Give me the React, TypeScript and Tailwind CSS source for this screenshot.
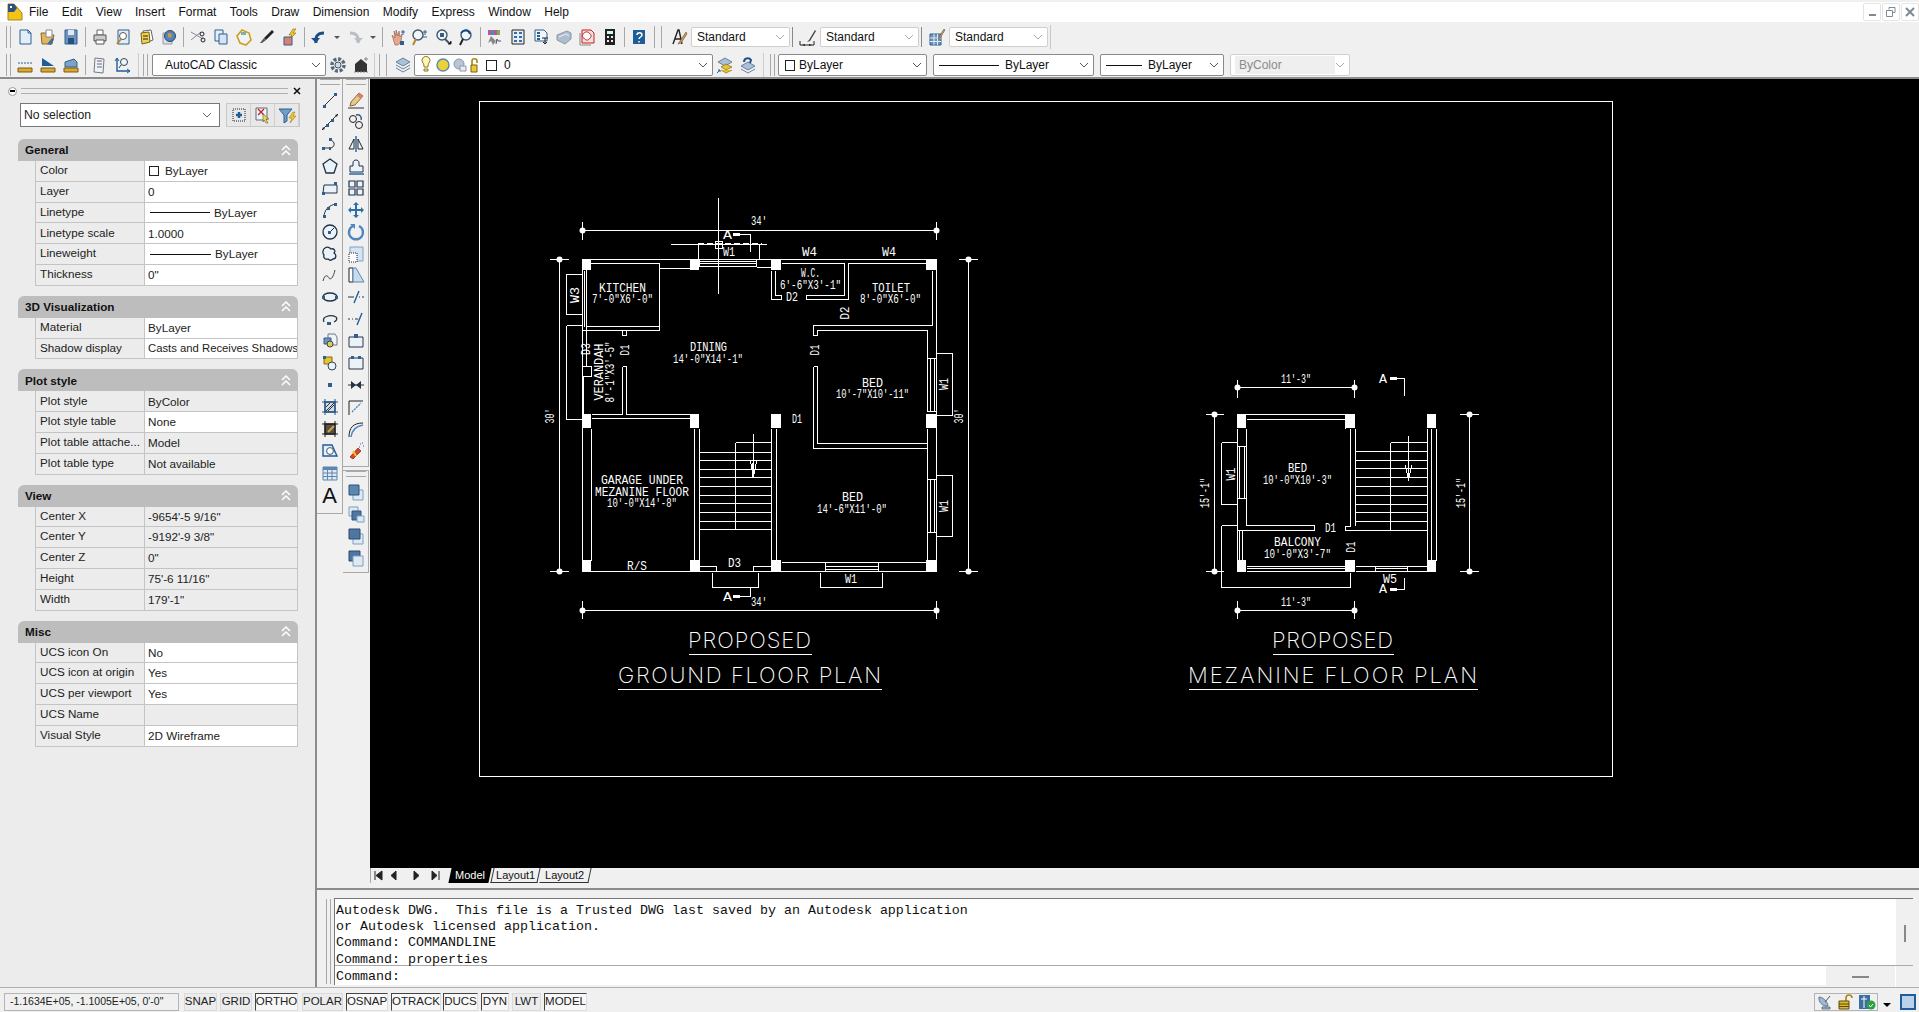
import type { ReactNode } from "react";

const B = "#2f5f8f";
const L = "#c7dbef";
const K = "#222";

const icons: Record<string, ReactNode> = {
  new: <><path d="M4 2h8l3 3v11H4z" fill="#e4eef8" stroke={B} /><path d="M12 2v3h3" fill="none" stroke={B} /></>,
  open: <><path d="M2 5h6l2 2h5l-2 9H3z" fill="#e2b65a" stroke="#8a6a2a" /><path d="M7 2h6v7H7z" fill="#fff" stroke="#889" /><path d="M8 16l5-6 2 1-3 6z" fill="#3b6ea5" /></>,
  save: <><path d="M3 2h12v14H3z" fill="#6f93bb" stroke={B} /><path d="M6 2h6v5H6z" fill="#dfe9f4" /><path d="M6 10h6v6H6z" fill="#24527f" /></>,
  plot: <><path d="M6 2h6v5H6z" fill="#fff" stroke="#666" /><path d="M3 7h12v6H3z" fill="#ccc" stroke="#555" /><path d="M5 12h8v4H5z" fill="#fff" stroke="#555" /></>,
  preview: <><path d="M4 2h11v14H4z" fill="#e4eef8" stroke={B} /><circle cx="9" cy="8" r="3.5" fill="#fff" stroke="#555" /><path d="M7 11l-4 5" stroke="#b8862d" strokeWidth="2" /></>,
  publish: <><path d="M6 3l8-1 2 10-8 3z" fill="#fff" stroke="#666" /><path d="M4 5l8-1 1 10-8 2z" fill="#f3d24f" stroke="#75601c" /><path d="M6 8h5M6 11h5" stroke={K} /></>,
  globe: <><path d="M3 5h9v11H3z" fill="#dde" stroke="#99a" /><circle cx="10" cy="8" r="5.5" fill="#4f86bf" stroke="#345" /><path d="M8 5l4 1-1 4-3-1z" fill="#d09a3a" /></>,
  cut: <><path d="M2 4l12 7M2 12l10-8" stroke="#889" /><circle cx="13" cy="6" r="2" fill="none" stroke={K} /><circle cx="14" cy="12" r="2" fill="none" stroke={K} /></>,
  copy: <><path d="M3 2h8v11H3z" fill="#e4eef8" stroke={B} /><path d="M7 6h8v10H7z" fill="#d5e4f3" stroke={B} /></>,
  paste: <><path d="M7 2l7 3 2 7-5 5-6-2-3-7z" fill="#eef3f8" stroke="#c8a21e" strokeWidth="1.6" /><path d="M6 4h5v3H6z" fill="#8aa" /></>,
  brush: <><path d="M14 2l2 2-8 8-2-2z" fill={K} /><path d="M6 10l2 2-4 3H2z" fill="#555" /></>,
  block: <><path d="M12 1l-4 6h3l-2 4 6-6h-3l3-4z" fill="#f3c928" stroke="#8a6a10" strokeWidth=".6" /><path d="M3 9h8v8H3z" fill="#d9806e" stroke={B} /></>,
  undo: <><path d="M6 15c-1-6 1-10 8-10" fill="none" stroke="#1d4f86" strokeWidth="3" /><path d="M1 10l5 5 4-5z" fill="#1d4f86" /></>,
  redo: <><path d="M12 15c1-6-1-10-8-10" fill="none" stroke="#b8bec4" strokeWidth="3" /><path d="M17 10l-5 5-4-5z" fill="#b8bec4" /></>,
  pan: <><path d="M4 7l3 3-1-7 2 5V2l2 6 1-5 1 6 2-3-1 8-3 3H7z" fill="#e7a58c" stroke="#8a5a4a" strokeWidth=".6" /><path d="M12 13h4v4h-4z" fill={B} /><path d="M15 2v5M13 4h4" stroke={B} /></>,
  zoomRt: <><circle cx="7" cy="7" r="5" fill="#eef5fb" stroke="#456" strokeWidth="1.4" /><path d="M5 11l-3 6" stroke="#b8862d" strokeWidth="2" /><path d="M14 2v5M12 4h4M12 9h4" stroke={B} /></>,
  zoomWin: <><circle cx="8" cy="7" r="5" fill="#eef5fb" stroke="#456" strokeWidth="1.4" /><path d="M6 5h4v4H6z" fill={B} /><path d="M11 11l4 4" stroke="#456" strokeWidth="2" /><path d="M14 16h3v-3" stroke={K} /></>,
  zoomPrev: <><circle cx="9" cy="7" r="5" fill="#eef5fb" stroke="#456" strokeWidth="1.4" /><path d="M6 11l-3 6" stroke={K} strokeWidth="2" /><path d="M4 5c3-4 8-3 9 1" fill="none" stroke="#1d4f86" strokeWidth="2" /></>,
  props: <><path d="M2 2h12v5H2z" fill="#c2548b" /><path d="M5 2h3v5H5z" fill="#4c8bc9" /><path d="M11 2h3v5h-3z" fill="#7cb24a" /><path d="M5 8l5 5-3 4-2-4-3 2z" fill="#888" /><path d="M10 16l1-5 1 2h3" fill="none" stroke="#456" /></>,
  dc: <><path d="M3 2h12v14H3z" fill="#e4eef8" stroke={K} /><path d="M5 4h3v2H5zM10 4h3v2h-3zM5 8h3v2H5zM10 8h3v2h-3zM5 12h3v2H5zM10 12h3v2h-3z" fill="#3b6ea5" /></>,
  palette: <><path d="M3 2h9l3 3v8H3z" fill="#eef5fb" stroke={B} /><path d="M5 5h3M5 8h3M5 11h3" stroke={B} strokeWidth="2" /><path d="M10 10h6M13 10v6M11 14l2 2 2-2" stroke={K} fill="none" /></>,
  sheet: <><path d="M2 7l10-4 4 2v6l-6 5-8-4z" fill="#aebccc" stroke="#8a9aa8" /><path d="M4 9l7-3 3 2" fill="none" stroke="#eef" /></>,
  markup: <><path d="M4 2h9l3 3v10H4z" fill="#f3dede" stroke="#c72020" /><path d="M6 5c2-2 5-1 6 1 2 1 1 4-1 5-1 2-4 1-5-1-2 0-2-4 0-5z" fill="#fff" stroke="#c72020" /><path d="M2 5v12h11" fill="none" stroke="#888" /></>,
  calc: <><path d="M4 1h10v16H4z" fill="#222" /><path d="M6 3h6v3H6z" fill="#cfd" /><path d="M6 8h2v2H6zM10 8h2v2h-2zM6 12h2v2H6zM10 12h2v2h-2z" fill="#eee" /></>,
  help: <><path d="M3 2h12v14H3z" fill="#1f5d99" /><path d="M7 7c0-3 5-3 5 0 0 2-3 2-3 4M9 13v1.5" stroke="#fff" fill="none" strokeWidth="1.5" /></>,
  ruleA: <><path d="M2 7h14" stroke={B} strokeDasharray="2 1" /><path d="M2 12h14v4H2z" fill="#d8a933" stroke="#7a5a10" /></>,
  ruleB: <><path d="M3 2l12 8H3z" fill="#1f5d99" /><path d="M2 12h14v4H2z" fill="#d8a933" stroke="#7a5a10" /></>,
  ruleC: <><path d="M3 6l9-3 3 3v5H3z" fill="#7fa2c7" stroke={B} /><path d="M2 12h14v4H2z" fill="#d8a933" stroke="#7a5a10" /></>,
  list: <><path d="M4 2l9 1-1 14-9-1z" fill="#eef3f8" stroke="#778" /><path d="M6 5h5M6 8h5M6 11h5" stroke="#667" /></>,
  ucs: <><path d="M3 2v13h13" fill="none" stroke="#1f5d99" strokeWidth="1.4" /><path d="M1 5l2-3 2 3M13 13l3 2-3 2" fill="none" stroke="#1f5d99" /><circle cx="10" cy="6" r="3.5" fill="#eef5fb" stroke="#345" /><path d="M7 9l-2 3" stroke="#345" /></>,
  gear: <><circle cx="9" cy="9" r="6" fill="none" stroke="#5a6a78" strokeWidth="3.5" strokeDasharray="3 1.6" /><circle cx="9" cy="9" r="3" fill="#cfdbe6" stroke="#456" /></>,
  house: <><path d="M3 8l6-5 6 5v8H3z" fill="#333" /><path d="M14 1v4M12 3h4" stroke="#888" /><path d="M2 16h14" stroke="#888" strokeDasharray="2 1" /></>,
  layers: <><path d="M9 2l7 4-7 4-7-4z" fill="#aac1d8" stroke="#69829b" /><path d="M2 9l7 4 7-4M2 12l7 4 7-4" fill="none" stroke="#69829b" /></>,
  layerCur: <><path d="M9 2l7 4-7 4-7-4z" fill="#aac1d8" stroke="#69829b" /><path d="M5 11l5 3 6-3-6-3zM5 14l5 3 6-3" fill="#e7c32f" stroke="#8a6a10" strokeWidth=".7" /><path d="M1 17l3-3M2 14h2v2" stroke="#1f5d99" fill="none" /></>,
  layerPrev: <><path d="M9 6l7 4-7 4-7-4z" fill="#aac1d8" stroke="#69829b" /><path d="M2 13l7 4 7-4" fill="none" stroke="#69829b" /><path d="M5 6c0-4 5-5 7-2l-1 3" fill="none" stroke="#1d4f86" strokeWidth="2" /></>,
  textStyle: <><path d="M3 16L8 2h1l3 14M5 11h6" fill="none" stroke={K} strokeWidth="1.4" /><path d="M16 4l-6 9-2 3 3-1 6-9z" fill="#c99a4a" stroke="#654" strokeWidth=".6" /></>,
  dimStyle: <><path d="M1 17h14M1 13v4M15 13v4" stroke={K} /><path d="M3 17l3-1v2zM13 17l-3-1v2z" fill={K} /><path d="M16 2l-6 10-2 2 3-1 6-10z" fill="#444" /></>,
  tableStyle: <><path d="M2 6h11v11H2z" fill="#6f93bb" stroke={B} /><path d="M2 10h11M2 13.5h11M6 6v11M9.5 6v11" stroke="#dfe9f4" /><path d="M16 1l-5 8-1 2 2-1 5-8z" fill="#c99a4a" stroke="#654" strokeWidth=".6" /></>,
  sel1: <><path d="M3 3h12v12H3z" fill="none" stroke={K} strokeDasharray="1 1" /><path d="M6 9h6M9 6v6" stroke="#1f5d99" strokeWidth="2.4" /></>,
  sel2: <><path d="M2 2h11v12H2z" fill="#eef5fb" stroke="#667" /><path d="M4 3l6 6M10 3L4 9" stroke="#d02020" strokeWidth="1.4" /><path d="M9 8l6 5-3 0 2 4-2 0-2-3-1 2z" fill="#f2d94a" stroke="#444" strokeWidth=".5" /></>,
  sel3: <><path d="M1 3h13L9 9v6l-3 2V9z" fill="#6f9fc9" stroke={B} /><path d="M15 6l-4 6h3l-2 5 6-7h-3l2-4z" fill="#f3c928" stroke="#8a6a10" strokeWidth=".5" /></>,
  line: <><path d="M3 15L15 3" stroke="#333" /><path d="M2 14h3v3H2zM13 2h3v3h-3z" fill={B} /></>,
  xline: <><path d="M1 17L17 1" stroke="#333" /><path d="M1 17l3-1-2-2zM17 1l-3 1 2 2z" fill={K} /><path d="M5 11h3v3H5zM10 6h3v3h-3z" fill={B} /></>,
  pline: <><path d="M3 13h6M9 13c5 0 6-7 0-8" fill="none" stroke="#333" /><path d="M1 12h3v3H1zM8 12h2v3H8zM8 3h3v3H8z" fill={B} /></>,
  polygon: <><path d="M9 2l7 5-3 9H5L2 7z" fill="#eaf2fa" stroke="#234" strokeWidth="1.3" /></>,
  rect: <><path d="M3 6h13v8H2z" fill="#eaf2fa" stroke="#234" /><path d="M13 3h3v3h-3zM1 13h3v3H1z" fill={B} /></>,
  arc: <><path d="M3 16C3 9 8 4 15 3" fill="none" stroke="#333" /><path d="M2 14h3v3H2zM13 2h3v3h-3zM6 6h3v3H6z" fill={B} /></>,
  circle: <><circle cx="9" cy="9" r="7" fill="#eaf2fa" stroke="#234" strokeWidth="1.3" /><path d="M9 9l4-4" stroke={K} /><path d="M7 8h3v3H7z" fill={B} /></>,
  cloud: <><path d="M4 3c3-2 5 0 6 1 3-1 5 2 3 4 3 2 2 6-1 6-2 2-4 1-5 0-3 1-5-2-4-4-2-2-1-6 1-7z" fill="#eaf2fa" stroke="#234" strokeWidth="1.3" /></>,
  spline: <><path d="M2 15c2-8 5-5 6-3s4 1 6-8" fill="none" stroke="#444" /></>,
  ellipse: <><ellipse cx="9" cy="9" rx="7" ry="4" fill="#eaf2fa" stroke="#234" strokeWidth="1.4" /><path d="M1 8h3v3H1zM14 8h3v3h-3z" fill={B} /></>,
  earc: <><path d="M3 12C0 7 9 4 15 7c2 2 0 4-2 5" fill="none" stroke="#234" strokeWidth="1.3" /><path d="M6 12h4v3H6z" fill={B} /></>,
  insert: <><path d="M7 2h7l2 3v8H7z" fill="#eaf2fa" stroke="#778" /><path d="M3 6h7v6H3z" fill="#6f93bb" stroke={B} /><circle cx="9" cy="12" r="3" fill="#d7cd5a" stroke="#444" /></>,
  mkblock: <><path d="M3 3h8v7H3z" fill="#e7c32f" stroke="#806a10" /><circle cx="11" cy="12" r="4" fill="#eaf2fa" stroke="#345" /><path d="M2 2h3v3H2z" fill={B} /></>,
  point: <><path d="M7 7h4v4H7z" fill={B} /></>,
  hatch: <><path d="M4 4h10v10H4z" fill="#cfdde9" stroke="#2a5480" strokeWidth="1.4" /><path d="M1 4h16M1 14h16M4 1v16M14 1v16" stroke="#2a5480" /><path d="M5 9l4-4M7 13l6-6M5 13l8-8" stroke="#333" /></>,
  gradient: <><path d="M4 4h10v10H4z" fill="#5a5140" stroke="#222" strokeWidth="1.4" /><path d="M1 4h16M1 14h16M4 1v16M14 1v16" stroke="#222" /><path d="M7 12l6-6" stroke="#c9a84c" strokeWidth="2" /></>,
  region: <><path d="M2 3h9l5 11H2z" fill="#e7f0f8" stroke="#1f5d99" strokeWidth="1.4" /><circle cx="9" cy="9" r="3.4" fill="#fff" stroke="#456" /></>,
  table: <><path d="M2 3h14v13H2z" fill="#dfe9f4" stroke="#5f86ad" /><path d="M2 3h14v3H2z" fill="#5f86ad" /><path d="M2 9h14M2 12.5h14M6.5 6v10M11 6v10" stroke="#5f86ad" /></>,
  erase: <><path d="M12 2l4 3-8 9-5 1 1-4z" fill="#e6c98e" stroke="#8a6a2a" /><path d="M12 2l4 3-2 3-4-3z" fill="#d9806e" /><path d="M1 17h16" stroke="#333" /></>,
  ccopy: <><circle cx="6" cy="6" r="3.5" fill="none" stroke={K} /><circle cx="12" cy="12" r="3.5" fill="none" stroke={K} /><path d="M9 2c4-1 6 2 5 5" fill="none" stroke={B} strokeWidth="1.4" /></>,
  mirror: <><path d="M9 1v16" stroke="#1f5d99" strokeWidth="1.4" /><path d="M7 4L2 14h5zM11 4l5 10h-5z" fill="#eef5fb" stroke={K} /></>,
  offset: <><path d="M3 15V9h3V6c0-4 6-4 6 0v3h4v6z" fill="#eaf2fa" stroke="#234" /><path d="M2 17h15" stroke="#1f5d99" strokeWidth="1.4" /></>,
  array: <><path d="M2 2h6v6H2zM10 2h6v6h-6zM2 10h6v6H2zM10 10h6v6h-6z" fill="#eaf2fa" stroke="#234" strokeWidth="1.2" /></>,
  move: <><path d="M9 1l3 3h-2v4h4V6l3 3-3 3v-2h-4v4h2l-3 3-3-3h2v-4H4v2L1 9l3-3v2h4V4H6z" fill="#2f6fa8" /></>,
  rotate: <><path d="M6 3a7 7 0 1 0 6 0" fill="none" stroke="#4f86bf" strokeWidth="2.4" /><path d="M3 1h5v5z" fill="#4f86bf" /></>,
  scale: <><path d="M3 2h13v14H3z" fill="#d5e4f3" stroke="#7d9fbf" /><path d="M2 8h8v9H2z" fill="#fff" stroke={K} strokeDasharray="1 1" /></>,
  stretch: <><path d="M2 2h4v14H2z" fill="#fff" stroke={K} /><path d="M6 2h3l8 14H6z" fill={L} stroke="#5f86ad" /></>,
  trim: <><path d="M1 9h6M12 9h1M15 9h2" stroke="#333" /><path d="M12 3L7 15" stroke="#1f5d99" strokeWidth="1.4" /></>,
  extend: <><path d="M1 9h2M5 9h1M8 9h3" stroke="#333" /><path d="M15 3l-5 12" stroke="#1f5d99" strokeWidth="1.4" /></>,
  brk1: <><path d="M2 5h14v10H2z" fill="#eaf2fa" stroke="#334" /><path d="M7 2h4v4H7z" fill={B} /></>,
  brk2: <><path d="M2 4h14v11H2z" fill="#eaf2fa" stroke="#334" /><path d="M4 2h3v3H4zM11 2h3v3h-3z" fill={B} /></>,
  join: <><path d="M1 9h16" stroke="#333" /><path d="M4 5l5 4-5 4zM14 5L9 9l5 4z" fill="#234" /></>,
  chamfer: <><path d="M2 17V3h14" fill="none" stroke={K} /><path d="M5 14L14 5" stroke="#4f86bf" strokeWidth="1.4" strokeDasharray="2 1" /></>,
  fillet: <><path d="M2 17C2 8 6 3 16 3" fill="none" stroke={K} /><path d="M4 17C5 10 9 6 16 5" fill="none" stroke="#4f86bf" strokeWidth="1.6" /></>,
  explode: <><path d="M3 15l8-9 3 3-8 8z" fill="#d44a20" stroke="#802" strokeWidth=".6" /><path d="M6 9l3 5" stroke="#f3c928" strokeWidth="2" /><path d="M13 2h1M16 4h1M15 1h1M12 5h1" stroke="#889" strokeWidth="1.5" /></>,
  order1: <><path d="M6 7h10v10H6z" fill="#dfe9f4" stroke="#7d9fbf" /><path d="M2 2h10v10H2z" fill="#5f86ad" stroke="#2a5480" /></>,
  order2: <><path d="M2 2h9v9H2z" fill="#dfe9f4" stroke="#7d9fbf" /><path d="M5 6h9v9H5z" fill="#4f76a0" stroke="#2a5480" /><path d="M10 11h7v6h-7z" fill="#dfe9f4" stroke="#7d9fbf" /></>,
  order3: <><path d="M6 7h10v10H6z" fill="#dfe9f4" stroke="#7d9fbf" /><path d="M2 2h11v10H2z" fill="#4f76a0" stroke="#2a4a70" /></>,
  order4: <><path d="M2 2h11v10H2z" fill="#4f76a0" stroke="#2a4a70" /><path d="M6 7h10v10H6z" fill="#dfe9f4" stroke="#7d9fbf" /></>,
};

function Icon({ name, size = 18 }: { name: string; size?: number }) {
  return (
    <svg width={size} height={size} viewBox="0 0 18 18" className="shrink-0">
      {icons[name]}
    </svg>
  );
}

function Btn({ name }: { name: string }) {
  return (
    <div className="w-[23px] h-[22px] flex items-center justify-center shrink-0">
      <Icon name={name} />
    </div>
  );
}

function Sep() {
  return (
    <div className="w-[6px] h-[20px] flex justify-center shrink-0">
      <div className="w-px bg-[#a8a8a8]" />
    </div>
  );
}

function Grip({ className = "" }: { className?: string }) {
  return <div className={`h-[22px] shrink-0 border-x border-[#a8a8a8] ${className}`} />;
}

function Chevron({ color = "#666" }: { color?: string }) {
  return (
    <svg width="10" height="6" viewBox="0 0 10 6" className="shrink-0">
      <path d="M1 1l4 4 4-4" fill="none" stroke={color} />
    </svg>
  );
}

function Combo({ w, children, light = false }: { w: string; children: ReactNode; light?: boolean }) {
  return (
    <div className={`${w} h-full bg-white rounded-[2px] border flex items-center pl-1 pr-1 shrink-0 overflow-hidden ${light ? "border-[#cfcfcf]" : "border-[#8a8a8a]"}`}>
      <div className="flex-1 flex items-center gap-1 min-w-0">{children}</div>
      <Chevron color={light ? "#aaa" : "#555"} />
    </div>
  );
}

function Dropdown() {
  return <div className="w-[13px] flex justify-center shrink-0"><div className="w-0 h-0 border-x-[3px] border-t-[3px] border-x-transparent border-t-[#555]" /></div>;
}

function Menu() {
  const items = ["File", "Edit", "View", "Insert", "Format", "Tools", "Draw", "Dimension", "Modify", "Express", "Window", "Help"];
  return (
    <div className="h-[20px] mt-[2px] bg-white flex items-center relative shrink-0">
      <svg width="16" height="18" viewBox="0 0 16 18" className="ml-[7px]">
        <path d="M1 1h6l8 9v7H1z" fill="#f0c419" stroke="#a8861a" />
        <path d="M1 1h6l3 4-3 4H1z" fill="#2f4f7f" />
        <path d="M3 3l2 2M5 3L3 5" stroke="#fff" />
      </svg>
      <div className="flex gap-[13.4px] ml-[6px] text-[12px] text-[#111]">
        {items.map((i) => <span key={i}>{i}</span>)}
      </div>
      <div className="ml-auto flex gap-[1px] items-start self-start mt-px">
        <div className="w-[18px] h-[18px] rounded-[2px] border border-[#e4e4e4] flex items-center justify-center"><div className="w-[7px] h-[2px] mt-[6px] bg-[#7d8a96]" /></div>
        <div className="w-[18px] h-[18px] rounded-[2px] border border-[#e4e4e4] flex items-center justify-center">
          <svg width="10" height="10" viewBox="0 0 10 10"><path d="M3 2.5V.5h6v5H7M.5 3.5h6v6h-6z" fill="none" stroke="#7d8a96" /></svg>
        </div>
        <div className="w-[18px] h-[18px] rounded-[2px] border border-[#e4e4e4] flex items-center justify-center">
          <svg width="10" height="10" viewBox="0 0 10 10"><path d="M1 1l8 8M9 1L1 9" stroke="#7d8a96" strokeWidth="2" /></svg>
        </div>
      </div>
    </div>
  );
}

function StyleCombo() {
  return (
    <div className="h-[20px] ml-px flex items-center">
      <Combo w="w-[99px]" light><span className="ml-[1px]">Standard</span></Combo>
    </div>
  );
}

function Toolbars() {
  return (
    <div className="shrink-0 text-[12px] text-[#111]">
      <div className="h-[27px] flex items-start pt-[3px]">
        <div className="h-[24px] w-[1051px] flex items-center border-r border-[#c9c9c9]">
          <Grip className="ml-[6px] mr-[2px] w-[5px]" />
          {["new", "open", "save"].map((n) => <Btn key={n} name={n} />)}
          <Sep />
          {["plot", "preview", "publish", "globe"].map((n) => <Btn key={n} name={n} />)}
          <Sep />
          {["cut", "copy", "paste", "brush", "block"].map((n) => <Btn key={n} name={n} />)}
          <Sep />
          <Btn name="undo" /><Dropdown /><Btn name="redo" /><Dropdown />
          <Sep />
          {["pan", "zoomRt", "zoomWin", "zoomPrev"].map((n) => <Btn key={n} name={n} />)}
          <Sep />
          {["props", "dc", "palette", "sheet", "markup", "calc"].map((n) => <Btn key={n} name={n} />)}
          <Sep />
          <Btn name="help" />
          <Grip className="ml-[4px] mr-[5px] w-[8px]" />
          <Btn name="textStyle" />
          <StyleCombo />
          <div className="w-px h-[20px] bg-[#888] ml-[2px] mr-[3px]" />
          <Btn name="dimStyle" />
          <StyleCombo />
          <div className="w-px h-[20px] bg-[#888] ml-[2px] mr-[3px]" />
          <Btn name="tableStyle" />
          <StyleCombo />
        </div>
      </div>
      <div className="h-[30px] flex items-center pt-[4px] border-b-2 border-[#8c8c8c]">
        <Grip className="ml-[6px] mr-[2px] w-[5px]" />
        {["ruleA", "ruleB", "ruleC"].map((n) => <Btn key={n} name={n} />)}
        <Sep />
        {["list", "ucs"].map((n) => <Btn key={n} name={n} />)}
        <div className="w-px h-[24px] bg-[#ccc] ml-[4px]" />
        <Grip className="ml-[4px] mr-[4px] w-[5px]" />
        <div className="h-[22px] flex items-center"><Combo w="w-[174px]"><span className="ml-2">AutoCAD Classic</span></Combo></div>
        <Btn name="gear" />
        <Btn name="house" />
        <div className="w-px h-[24px] bg-[#ccc] ml-[2px]" />
        <Grip className="ml-[4px] mr-[4px] w-[8px]" />
        <Btn name="layers" />
        <div className="h-[22px] flex items-center">
          <Combo w="w-[299px]">
            <svg width="62" height="18" viewBox="0 0 62 18" className="shrink-0">
              <path d="M4 7a4 4 0 1 1 6 0c-1 1-1 3-1 4H5c0-1 0-3-1-4zM5 13h4v2H5z" fill="#fff6b8" stroke="#887a20" />
              <circle cx="24" cy="9" r="6" fill="#e9d23a" stroke="#5f86ad" strokeWidth="1.4" />
              <circle cx="40" cy="8" r="5" fill="#b9c6d2" stroke="#8a9aa8" />
              <path d="M41 10h6v5h-6z" fill="#e4eef8" stroke="#8a9aa8" />
              <path d="M53 9V5c0-3 5-3 5 0v2" fill="none" stroke="#a8861a" strokeWidth="1.6" />
              <path d="M52 9h6v7h-6z" fill="#e9c83a" stroke="#7a6010" />
            </svg>
            <div className="w-[11px] h-[11px] border border-[#222] bg-white ml-px" />
            <span className="ml-[3px]">0</span>
          </Combo>
        </div>
        <Btn name="layerCur" />
        <Btn name="layerPrev" />
        <div className="w-px h-[24px] bg-[#ccc] ml-[4px]" />
        <Grip className="ml-[6px] mr-[3px] w-[5px]" />
        <div className="h-[22px] flex items-center gap-[6px]">
          <Combo w="w-[149px]">
            <div className="w-[10px] h-[11px] border border-[#222] ml-[2px]" />
            <span>ByLayer</span>
          </Combo>
          <Combo w="w-[161px]">
            <div className="w-[60px] h-px bg-[#111] ml-[1px] shrink-0" />
            <span className="ml-[2px]">ByLayer</span>
          </Combo>
          <Combo w="w-[124px]">
            <div className="w-[36px] h-px bg-[#111] ml-[1px] shrink-0" />
            <span className="ml-[2px]">ByLayer</span>
          </Combo>
          <Combo w="w-[120px]" light>
            <div className="flex-1 bg-[#efefef] h-[18px] flex items-center text-[#8a8a8a] px-1">ByColor</div>
          </Combo>
        </div>
      </div>
    </div>
  );
}

type Row = { k: string; v?: ReactNode; ro?: boolean };
type Section = { title: string; rows: Row[] };

const lineVal = (w: string) => (
  <span className="flex items-center gap-[4px] pl-[2px]">
    <span className={`${w} h-px bg-[#111]`} />
    ByLayer
  </span>
);

const sections: Section[] = [
  {
    title: "General",
    rows: [
      { k: "Color", v: <span className="flex items-center gap-[6px] pl-px"><span className="w-[10px] h-[10px] border border-[#222]" />ByLayer</span> },
      { k: "Layer", v: "0" },
      { k: "Linetype", v: lineVal("w-[60px]") },
      { k: "Linetype scale", v: "1.0000" },
      { k: "Lineweight", v: lineVal("w-[61px]") },
      { k: "Thickness", v: '0"' },
    ],
  },
  {
    title: "3D Visualization",
    rows: [
      { k: "Material", v: "ByLayer" },
      { k: "Shadow display", v: <span className="text-[11.3px]">Casts and Receives Shadows</span> },
    ],
  },
  {
    title: "Plot style",
    rows: [
      { k: "Plot style", v: "ByColor", ro: true },
      { k: "Plot style table", v: "None" },
      { k: "Plot table attache...", v: "Model", ro: true },
      { k: "Plot table type", v: "Not available", ro: true },
    ],
  },
  {
    title: "View",
    rows: [
      { k: "Center X", v: "-9654'-5 9/16\"", ro: true },
      { k: "Center Y", v: "-9192'-9 3/8\"", ro: true },
      { k: "Center Z", v: '0"', ro: true },
      { k: "Height", v: "75'-6 11/16\"", ro: true },
      { k: "Width", v: "179'-1\"", ro: true },
    ],
  },
  {
    title: "Misc",
    rows: [
      { k: "UCS icon On", v: "No" },
      { k: "UCS icon at origin", v: "Yes" },
      { k: "UCS per viewport", v: "Yes" },
      { k: "UCS Name", ro: true },
      { k: "Visual Style", v: "2D Wireframe" },
    ],
  },
];

function Properties() {
  return (
    <div className="w-[317px] shrink-0 bg-[#ececec] border-r-2 border-[#8c8c8c] text-[11.7px] text-[#222]">
      <div className="h-[24px] flex items-center">
        <div className="w-[9px] h-[9px] ml-[8px] rounded-full border border-[#999] bg-white flex items-center justify-center"><div className="w-[5px] h-[1.5px] bg-black" /></div>
        <div className="w-[267px] h-[6px] ml-[4px] border-y border-[#b0b0b0]" />
        <svg width="8" height="8" viewBox="0 0 8 8" className="ml-[5px]"><path d="M1 1l6 6M7 1L1 7" stroke="#111" strokeWidth="1.6" /></svg>
      </div>
      <div className="flex h-[24px] ml-[20px] gap-[6px]">
        <div className="w-[200px] bg-white border border-[#777] flex items-center pl-[3px] pr-[7px] justify-between text-[12.2px]">
          No selection
          <Chevron />
        </div>
        <div className="flex border border-[#c8c8c8] h-[24px]">
          {["sel1", "sel2", "sel3"].map((n) => (
            <div key={n} className="w-[24px] flex items-center justify-center border-r border-[#d0d0d0] bg-[#e8e8e8]"><Icon name={n} /></div>
          ))}
        </div>
      </div>
      <div className="mt-[12px] ml-[18px] w-[280px] flex flex-col gap-[10px]">
        {sections.map((s) => (
          <div key={s.title}>
            <div className="h-[22px] bg-[#bdbdbd] rounded-t-[6px] flex items-center justify-between pl-[7px] pr-[7px] font-bold text-[11.7px] text-[#111]">
              {s.title}
              <svg width="10" height="11" viewBox="0 0 10 11">
                <path d="M1 5l4-4 4 4M1 10l4-4 4 4" fill="none" stroke="#fff" strokeWidth="1.5" />
              </svg>
            </div>
            <div className="ml-[17px] border-l border-r border-[#c4c4c4]">
              {s.rows.map((r) => (
                <div key={r.k} className="h-[20.8px] flex border-b border-[#c4c4c4]">
                  <div className="w-[109px] border-r border-[#c4c4c4] pl-[4px] pb-[2px] flex items-center whitespace-nowrap overflow-hidden">{r.k}</div>
                  <div className={`flex-1 flex items-center pl-[3px] whitespace-nowrap overflow-hidden ${r.ro ? "bg-[#ececec]" : "bg-white"}`}>{r.v}</div>
                </div>
              ))}
            </div>
          </div>
        ))}
      </div>
    </div>
  );
}

function VGroup({ names, className = "" }: { names: string[]; className?: string }) {
  return (
    <div className={`w-[26px] flex flex-col items-center border-r border-b border-[#a8a8a8] bg-[#f0f0f0] ${className}`}>
      <div className="w-[20px] h-[6px] border-y border-[#a8a8a8] mb-[4px]" />
      {names.map((n) => (
        <div key={n} className="h-[21.94px] flex items-center justify-center"><Icon name={n} /></div>
      ))}
    </div>
  );
}

function LeftTools() {
  const draw = ["line", "xline", "pline", "polygon", "rect", "arc", "circle", "cloud", "spline", "ellipse", "earc", "insert", "mkblock", "point", "hatch", "gradient", "region", "table"];
  const modify = ["erase", "ccopy", "mirror", "offset", "array", "move", "rotate", "scale", "stretch", "trim", "extend", "brk1", "brk2", "join", "chamfer", "fillet", "explode"];
  return (
    <div className="w-[53px] shrink-0 flex bg-[#f0f0f0]">
      <div>
        <div className="w-[26px] flex flex-col items-center border-r border-b border-[#a8a8a8] pb-[5px]">
          <div className="w-[20px] h-[6px] border-y border-[#a8a8a8] mb-[4px]" />
          {draw.map((n) => (
            <div key={n} className="h-[21.94px] flex items-center justify-center"><Icon name={n} /></div>
          ))}
          <div className="h-[24px] flex items-center justify-center text-[22px] leading-none text-[#111]">A</div>
        </div>
      </div>
      <div className="flex flex-col">
        <VGroup names={modify} className="pb-[4px]" />
        <VGroup names={["order1", "order2", "order3", "order4"]} className="mt-[3px] pb-[3px] border-t" />
      </div>
    </div>
  );
}

type Label = [string, number, number, number, number?];

// [text, left x, baseline y, width, font size]
const labels: Label[] = [
  ["34'", 751, 225, 16],
  ["A", 723, 239, 9, 13],
  ["W1", 723, 256, 12],
  ["W4", 802, 256, 15],
  ["W4", 882, 256, 14],
  ["W.C.", 801, 277, 19],
  ["6'-6\"X3'-1\"", 780, 289, 61],
  ["KITCHEN", 599, 292, 47],
  ["7'-0\"X6'-0\"", 592, 303, 61],
  ["TOILET", 872, 292, 38],
  ["8'-0\"X6'-0\"", 860, 303, 61],
  ["D2", 786, 301, 12],
  ["DINING", 690, 351, 37],
  ["14'-0\"X14'-1\"", 673, 363, 70],
  ["BED", 862, 387, 21],
  ["10'-7\"X10'-11\"", 836, 398, 73],
  ["D1", 792, 423, 10],
  ["GARAGE UNDER", 601, 484, 82],
  ["MEZANINE FLOOR", 595, 496, 94],
  ["10'-0\"X14'-8\"", 607, 507, 70],
  ["BED", 842, 501, 21],
  ["14'-6\"X11'-0\"", 817, 513, 70],
  ["R/S", 627, 570, 20],
  ["D3", 728, 567, 13],
  ["W1", 845, 583, 12],
  ["A", 723, 601, 9, 13],
  ["34'", 751, 606, 16],
  ["11'-3\"", 1281, 383, 30],
  ["A", 1379, 383, 8, 13],
  ["BED", 1288, 472, 19],
  ["10'-0\"X10'-3\"", 1263, 484, 69],
  ["D1", 1325, 532, 11],
  ["BALCONY", 1274, 546, 47],
  ["10'-0\"X3'-7\"", 1264, 558, 67],
  ["W5", 1383, 583, 14],
  ["A", 1379, 593, 8, 13],
  ["11'-3\"", 1281, 606, 30],
];

const titles: [string, number, number, number][] = [
  ["PROPOSED", 688, 648, 123],
  ["GROUND FLOOR PLAN", 618, 683, 263],
  ["PROPOSED", 1272, 648, 121],
  ["MEZANINE FLOOR PLAN", 1188, 683, 289],
];

// [text, centre x, centre y, length] drawn reading bottom to top
const vLabels: [string, number, number, number][] = [
  ["D2", 845, 313, 13],
  ["W3", 575, 295, 16],
  ["D3", 586, 349, 12],
  ["VERANDAH", 599, 372, 57],
  ["8'-1\"X3'-5\"", 610, 372, 61],
  ["D1", 625, 350, 11],
  ["D1", 815, 350, 11],
  ["W1", 944, 384, 12],
  ["W1", 944, 506, 12],
  ["30'", 550, 416, 15],
  ["30'", 959, 416, 15],
  ["W1", 1231, 474, 13],
  ["D1", 1351, 547, 11],
  ["15'-1\"", 1205, 493, 30],
  ["15'-1\"", 1461, 493, 30],
];

const wallPaths = [
  // drawing frame
  "M479 101H1612V776H479Z",
  // ground floor: dimensions
  "M582 230H936M582 221V239M936 221V239M582 610H936M582 600V618M936 600V618",
  "M559 259V571M549 259H568M549 571H568M968 259V571M958 259H977M958 571H977",
  // section A markers and crosshair
  "M733 234H750V251M733 596H750V587M718 197V293M670 244H766M698 244V258M759 244V258",
  // outer walls
  "M582 259H936M936 259V571M582 259V571M582 571H936",
  // kitchen
  "M586 263H659V326H586ZM582 330H659V326M622 330V335H626V330M659 268H690",
  "M586 263V326M584 270V326M566 274H582V314H566Z",
  // W1 top
  "M699 261H756M699 263H756M699 266H756M756 267H771M699 259V266M756 259V266",
  // WC & toilet
  "M771 270V299H781V295H775V270M781 263H844V295H806V299H848V263H926M932 270V325H813V335H817V330H927V358",
  // bed right + window
  "M927 358V411M930 358V411M934 358V411M927 358H936M927 411H936M936 353H952V415H936",
  // verandah
  "M566 325H582M566 325V419H582M583 376V414M586 326V366M582 366H591V376H582",
  "M622 366V414H591M626 366V414H690M622 366H626M591 418H690",
  // walls mid
  "M813 366H817M813 366V448H927M817 366V443H927M927 428V479M927 532V560",
  "M927 479V532M930 479V532M934 479V532M927 479H936M927 532H936M936 475H952V536H936",
  // garage
  "M591 428V560M694 428V560M699 428V571M771 428V560M776 428V560",
  // stairs
  "M699 452H771M699 460H771M699 469H771M699 477H771M699 486H771M699 495H771M699 503H771M699 512H771M699 521H771M699 529H771M735 442V529M735 442H771M753 433V476",
  "M750 461L753 476L756 461M752 462V476",
  // bottom
  "M699 566H716V571M771 566H753V571M781 562H926M825 566H878M825 569H878M825 562V571M878 562V571",
  "M712 572V587H758V572M820 572V587H882V572",
  // titles
  "M688 654H811M617 689H881M1272 654H1393M1188 689H1477",
  // mezzanine: dimensions
  "M1237 387H1354M1237 379V397M1354 379V397M1237 610H1354M1237 600V618M1354 600V618",
  "M1214 414V571M1205 414H1223M1205 571H1223M1469 414V571M1459 414H1478M1459 571H1478",
  "M1390 378H1404V395M1390 589H1404V577",
  // mezzanine: walls
  "M1237 414H1345M1246 419H1345M1237 428V560M1246 428V525H1314V530H1237M1239 446V498M1244 446V498M1237 446H1246M1237 498H1246M1221 442H1237M1221 442V504H1237",
  "M1350 428V526H1345V530H1427M1355 428V525M1345 419V428M1427 428V560M1431 428V560M1436 428V560",
  "M1355 451H1427M1355 460H1427M1355 468H1427M1355 477H1427M1355 486H1427M1355 495H1427M1355 504H1427M1355 512H1427M1355 521H1427M1390 442V530M1390 442H1427M1408 435V480",
  "M1405 465L1408 480L1411 465",
  "M1239 530V560M1242 530V560M1246 566H1345M1246 568H1345M1246 571H1345M1355 566H1427M1355 571H1427M1375 566V571M1407 566V571M1375 568H1407",
  "M1221 525H1237M1221 525V587H1350V572",
];

const columns = [
  [582, 259, 9, 11], [690, 259, 9, 11], [771, 259, 10, 11], [926, 259, 10, 11],
  [582, 414, 9, 14], [690, 414, 9, 14], [771, 414, 10, 14], [926, 414, 10, 14],
  [582, 560, 9, 12], [690, 560, 9, 12], [771, 560, 10, 12], [926, 560, 10, 12],
  [1237, 414, 9, 14], [1345, 414, 10, 14], [1427, 414, 9, 14],
  [1237, 560, 9, 12], [1345, 560, 10, 12], [1427, 560, 9, 12],
];

const dots = [
  [582, 230], [936, 230], [582, 610], [936, 610], [559, 259], [559, 571], [968, 259], [968, 571],
  [1237, 387], [1354, 387], [1237, 610], [1354, 610], [1214, 414], [1214, 571], [1469, 414], [1469, 571],
];

function Drawing() {
  return (
    <svg viewBox="370 79 1549 789" className="block w-full h-full">
      <rect x="370" y="79" width="1549" height="789" fill="#000" />
      <g transform="translate(0.5 0.5)" shapeRendering="crispEdges" stroke="#fff" fill="none">
        {wallPaths.map((d, i) => <path key={i} d={d} />)}
        <path d="M697 243H761" strokeDasharray="6 3" />
        <rect x="715" y="241" width="7" height="7" />
      </g>
      <g fill="#fff" shapeRendering="crispEdges">
        {columns.map(([x, y, w, h], i) => <rect key={i} x={x} y={y} width={w} height={h} />)}
        <path d="M733 233h7v3h-7zM733 595h7v3h-7zM1390 377h7v3h-7zM1390 588h7v3h-7z" />
      </g>
      <g fill="#fff">
        {dots.map(([x, y], i) => <circle key={i} cx={x + 0.5} cy={y + 0.5} r="3" />)}
      </g>
      <g fill="#fff" fontFamily="'Liberation Mono', monospace">
        {labels.map(([t, x, y, w, size = 12], i) => (
          <text key={i} x={x} y={y} fontSize={size} textLength={w} lengthAdjust="spacingAndGlyphs">{t}</text>
        ))}
        {vLabels.map(([t, x, y, w], i) => (
          <text key={i} transform={`translate(${x + 4} ${y + w / 2}) rotate(-90)`} fontSize={12} textLength={w} lengthAdjust="spacingAndGlyphs">{t}</text>
        ))}
      </g>
      <g fill="#fff" fontFamily="Inter, 'Liberation Sans', sans-serif" fontWeight="200">
        {titles.map(([t, x, y, w], i) => (
          <text key={i} x={x} y={y} fontSize={22} textLength={w} lengthAdjust="spacing">{t}</text>
        ))}
      </g>
    </svg>
  );
}

function Tabs() {
  return (
    <div className="h-[15px] flex items-center border-l border-[#a8a8a8] text-[11px] text-[#111] shrink-0">
      <svg width="76" height="11" viewBox="0 0 76 11" className="ml-[1px] shrink-0">
        <path d="M3 1v9M10 1v9L4 5.500zM24 1v9l-5-4.500zM42 1v9l5-4.500zM60 1v9l5-4.500zM67 1v9" fill="#222" stroke="#222" />
      </svg>
      <div className="w-[40px] h-full ml-[2px] bg-black text-white flex items-center justify-center -skew-x-12 shrink-0"><span className="skew-x-12">Model</span></div>
      <div className="w-[47px] h-full ml-[2px] border-r border-b border-l border-[#333] flex items-center justify-center -skew-x-12 shrink-0"><span className="skew-x-12">Layout1</span></div>
      <div className="w-[49px] h-full ml-[2px] border-r border-b border-[#333] flex items-center justify-center -skew-x-12 shrink-0"><span className="skew-x-12">Layout2</span></div>
    </div>
  );
}

function CommandLine() {
  return (
    <div className="h-[99px] shrink-0 mt-[5px] border-t-2 border-[#8c8c8c] relative">
      <div className="absolute left-[9px] top-[9px] w-[5px] h-[85px] border-x border-[#a8a8a8]" />
      <div className="ml-[17px] mr-[6px] mt-[8px] border-t border-l border-[#777] bg-white h-[87px] font-['Liberation_Mono',monospace] text-[13.33px] text-[#111] flex flex-col">
        <div className="h-[67px] border-b border-[#aaa] flex">
          <div className="flex-1 pl-[1px] leading-[16.2px] pt-[4px] whitespace-pre">
            <div>Autodesk DWG.  This file is a Trusted DWG last saved by an Autodesk application</div>
            <div>or Autodesk licensed application.</div>
            <div>Command: COMMANDLINE</div>
            <div>Command: properties</div>
          </div>
          <div className="w-[17px] bg-[#f0f0f0] flex items-center justify-center">
            <div className="w-[2px] h-[17px] mt-[2px] bg-[#888]" />
          </div>
        </div>
        <div className="flex-1 flex">
          <div className="flex-1 pl-[1px] leading-[20px] pt-[1px]">Command:</div>
          <div className="w-[69px] bg-[#f0f0f0] flex items-center justify-center"><div className="w-[17px] h-[2px] bg-[#888]" /></div>
          <div className="w-[18px] bg-[#f0f0f0] border-l border-white" />
        </div>
      </div>
    </div>
  );
}

function StatusBar() {
  const btns: [string, string, boolean][] = [
    ["SNAP", "w-[33px] ml-[5px]", false],
    ["GRID", "w-[32px] ml-[3px]", false],
    ["ORTHO", "w-[43px] ml-[3px]", true],
    ["POLAR", "w-[41px] ml-[4px]", false],
    ["OSNAP", "w-[42px] ml-[3px]", true],
    ["OTRACK", "w-[50px] ml-[3px]", true],
    ["DUCS", "w-[35px] ml-[2px]", true],
    ["DYN", "w-[28px] ml-[3px]", true],
    ["LWT", "w-[29px] ml-[3px]", false],
    ["MODEL", "w-[43px] ml-[3px]", true],
  ];
  return (
    <div className="h-[25px] shrink-0 border-t border-[#b0b0b0] flex items-center pt-[3px] text-[11.5px] text-[#222] relative">
      <div className="ml-[4px] w-[175px] h-[18px] border border-[#b4b4b4] flex items-center pl-[5px] whitespace-nowrap text-[10.5px]">-1.1634E+05, -1.1005E+05, 0'-0"</div>
      {btns.map(([t, cls, on]) => (
        <div key={t} className={`${cls} h-[18px] flex items-center justify-center border ${on ? "bg-[#f8f8f8] border-t-[#444] border-l-[#444] border-r-[#ddd] border-b-[#ddd]" : "bg-[#ececec] border-[#dadada]"}`}>{t}</div>
      ))}
      <div className="ml-auto w-[64px] flex items-center justify-center h-[18px] border border-[#b4b4b4] gap-[3px]">
        <svg width="18" height="16" viewBox="0 0 18 16"><path d="M3 3c4 0 9 5 9 9-5 1-10-4-9-9zM6 13h8v2H6z" fill="#9bb8d6" stroke="#456" strokeWidth=".7" /><path d="M9 8l5-6" stroke="#456" /></svg>
        <svg width="18" height="16" viewBox="0 0 18 16"><path d="M9 7V4c0-4 6-4 6 0" fill="none" stroke="#a8861a" strokeWidth="1.6" /><path d="M2 7h10v8H2z" fill="#e0b92f" stroke="#5a4a10" /><path d="M2 10h10M2 12.500h10" stroke="#5a4a10" /></svg>
        <svg width="18" height="16" viewBox="0 0 18 16"><path d="M1 1h11v14H1z" fill="#3b6ea5" /><path d="M6 2v12M3 5h6" stroke="#fff" /><circle cx="13" cy="11" r="4.500" fill="#2ea043" /><path d="M11 11l1.500 2 2.500-3" stroke="#fff" fill="none" /></svg>
      </div>
      <div className="ml-[5px] w-0 h-0 border-x-[4px] border-t-[4px] border-x-transparent border-t-black mt-[6px]" />
      <div className="ml-[9px] mr-[3px] w-[16px] h-[16px] border-2 border-[#1f5d99] bg-[#b9d2ea]" />
    </div>
  );
}

export default function App() {
  return (
    <div className="w-[1919px] h-[1012px] overflow-hidden bg-[#f0f0f0] flex flex-col font-['Liberation_Sans',Arial,sans-serif]">
      <Menu />
      <Toolbars />
      <div className="flex-1 flex min-h-0">
        <Properties />
        <div className="flex-1 flex flex-col min-w-0">
          <div className="flex-1 flex min-h-0">
            <LeftTools />
            <div className="flex-1 min-w-0 flex flex-col">
              <div className="flex-1 min-h-0"><Drawing /></div>
              <Tabs />
            </div>
          </div>
          <CommandLine />
        </div>
      </div>
      <StatusBar />
    </div>
  );
}
